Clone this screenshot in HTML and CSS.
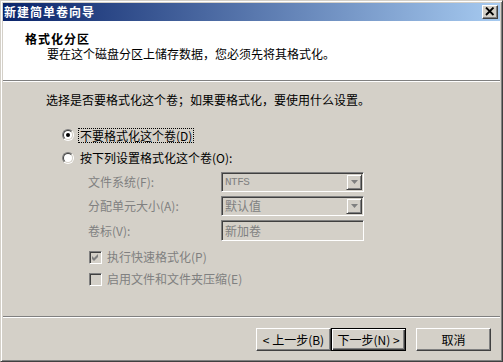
FILE: index.html
```html
<!DOCTYPE html>
<html lang="zh-CN">
<head>
<meta charset="utf-8">
<title>新建简单卷向导</title>
<link rel="stylesheet" href="styles.css">
</head>
<body>
<div class="window">
  <div class="titlebar">
    <span class="title">新建简单卷向导</span>
    <span class="close"><svg width="10" height="9" viewBox="0 0 10 9"><path d="M1 0.5 L8.5 8 M8.5 0.5 L1 8" stroke="#000" stroke-width="1.8" fill="none"/></svg></span>
  </div>
  <div class="header">
    <div class="h-title">格式化分区</div>
    <div class="h-sub">要在这个磁盘分区上储存数据，您必须先将其格式化。</div>
  </div>
  <div class="body">
    <div class="intro">选择是否要格式化这个卷；如果要格式化，要使用什么设置。</div>
    <div class="opt opt1"><span class="radio checked"></span><span class="focus">不要格式化这个卷(D)</span></div>
    <div class="opt opt2"><span class="radio"></span><span class="opt-text">按下列设置格式化这个卷(O):</span></div>
    <div class="fields">
      <div class="label">文件系统(F):</div>
      <div class="combo"><span class="value latin">NTFS</span><span class="arrow"><svg width="7" height="4" viewBox="0 0 7 4"><path d="M0 0 H7 L3.5 4 Z" fill="#808080"/></svg></span></div>
      <div class="label">分配单元大小(A):</div>
      <div class="combo"><span class="value">默认值</span><span class="arrow"><svg width="7" height="4" viewBox="0 0 7 4"><path d="M0 0 H7 L3.5 4 Z" fill="#808080"/></svg></span></div>
      <div class="label">卷标(V):</div>
      <div class="textbox"><span class="value">新加卷</span></div>
    </div>
    <div class="chk chk1"><span class="checkbox"><svg width="7" height="7" viewBox="0 0 7 7"><path d="M0 2 L2 4 L6 0 V3 L2 7 L0 5 Z" fill="#808080"/></svg></span><span class="chk-text">执行快速格式化(P)</span></div>
    <div class="chk chk2"><span class="checkbox"></span><span class="chk-text">启用文件和文件夹压缩(E)</span></div>
    <div class="spacer"></div>
    <div class="sep"></div>
    <div class="buttons">
      <button class="btn">&lt; 上一步(B)</button>
      <button class="btn default">下一步(N) &gt;</button>
      <button class="btn cancel">取消</button>
    </div>
  </div>
</div>
</body>
</html>
```
FILE: styles.css
```css
html, body {
  margin: 0;
  padding: 0;
  background: #d4d0c8;
}
body {
  font-family: "Noto Sans CJK SC", "Noto Sans CJK JP", sans-serif;
  font-size: 12px;
  line-height: 14px;
  color: #000;
}
.window {
  width: 503px;
  height: 362px;
  box-sizing: border-box;
  border: 1px solid;
  border-color: #d4d0c8 #404040 #404040 #d4d0c8;
  box-shadow: inset 1px 1px 0 #fff, inset -1px -1px 0 #808080;
  padding: 2px;
  background: #d4d0c8;
  display: flex;
  flex-direction: column;
}
.titlebar {
  height: 18px;
  flex: none;
  background: linear-gradient(to right, #0a246a, #a6caf0);
  display: flex;
  align-items: flex-start;
  justify-content: space-between;
}
.title {
  color: #fff;
  font-weight: bold;
  letter-spacing: 1px;
  padding-left: 1px;
  line-height: 18px;
}
.close {
  width: 16px;
  height: 14px;
  box-sizing: border-box;
  margin-top: 2px;
  margin-right: 2px;
  background: #d4d0c8;
  border: 1px solid;
  border-color: #fff #404040 #404040 #fff;
  box-shadow: inset -1px -1px 0 #808080;
  display: flex;
  align-items: center;
  justify-content: center;
  padding: 0 1px 1px 0;
}
.close svg { display: block; }
.header {
  height: 59px;
  flex: none;
  background: #fff;
  border-bottom: 1px solid #808080;
  padding-top: 11px;
  box-sizing: content-box;
  height: 48px;
}
.h-title {
  font-weight: bold;
  padding-left: 22px;
  letter-spacing: 1px;
}
.h-sub {
  padding-left: 44px;
  margin-top: 1px;
}
.body {
  flex: 1;
  border-top: 1px solid #fff;
  display: flex;
  flex-direction: column;
}
.intro {
  margin-top: 11px;
  padding-left: 43px;
}
.opt {
  display: flex;
  align-items: center;
  height: 16px;
  padding-left: 59px;
}
.opt1 { margin-top: 20px; }
.opt2 { margin-top: 7px; }
.radio {
  position: relative;
  width: 12px;
  height: 12px;
  box-sizing: border-box;
  border-radius: 50%;
  border: 1px solid;
  border-color: #808080 #fff #fff #808080;
  flex: none;
}
.radio::before {
  content: "";
  position: absolute;
  inset: 0;
  border-radius: 50%;
  border: 1px solid;
  border-color: #404040 #d4d0c8 #d4d0c8 #404040;
  background: #fff;
}
.radio.checked::after {
  content: "";
  position: absolute;
  left: 3px;
  top: 3px;
  width: 4px;
  height: 4px;
  border-radius: 50%;
  background: #000;
}
.focus {
  margin-left: 4px;
  padding: 0 1px;
  border: 1px dotted #000;
  line-height: 13px;
}
.opt-text { margin-left: 6px; }
.fields {
  margin-top: 6px;
  padding-left: 85px;
  display: grid;
  grid-template-columns: 133px 143px;
  grid-template-rows: 20px 20px 21px;
  row-gap: 4px;
  align-items: center;
  color: #808080;
}
.combo, .textbox {
  height: 100%;
  box-sizing: border-box;
  border: 1px solid;
  border-color: #808080 #fff #fff #808080;
  box-shadow: inset 1px 1px 0 #404040, inset -1px -1px 0 #d4d0c8;
  padding: 2px 2px 2px 3px;
  display: flex;
  align-items: center;
  justify-content: space-between;
}
.value { line-height: 14px; }
.latin { font-family: "Liberation Mono", monospace; font-size: 11px; letter-spacing: -0.5px; }
.arrow {
  width: 16px;
  height: 16px;
  box-sizing: border-box;
  margin-right: -1px;
  border: 1px solid;
  border-color: #d4d0c8 #404040 #404040 #d4d0c8;
  box-shadow: inset 1px 1px 0 #fff, inset -1px -1px 0 #808080;
  display: flex;
  align-items: center;
  justify-content: center;
  padding-bottom: 1px;
}
.arrow svg { display: block; }
.chk {
  display: flex;
  align-items: center;
  height: 16px;
  padding-left: 86px;
  color: #808080;
}
.chk1 { margin-top: 8px; }
.chk2 { margin-top: 6px; }
.checkbox {
  width: 13px;
  height: 13px;
  box-sizing: border-box;
  border: 1px solid;
  border-color: #808080 #fff #fff #808080;
  box-shadow: inset 1px 1px 0 #404040, inset -1px -1px 0 #d4d0c8;
  background: #d4d0c8;
  display: flex;
  align-items: center;
  justify-content: center;
  flex: none;
}
.checkbox svg { display: block; }
.chk-text { margin-left: 5px; }
.spacer { flex: 1; }
.sep {
  border-top: 1px solid #808080;
  border-bottom: 1px solid #fff;
}
.buttons {
  display: flex;
  justify-content: flex-end;
  margin-top: 10px;
  margin-bottom: 8px;
  padding-right: 9px;
}
.btn {
  width: 75px;
  height: 23px;
  box-sizing: border-box;
  font: inherit;
  color: #000;
  background: #d4d0c8;
  border: 1px solid;
  border-color: #fff #404040 #404040 #fff;
  box-shadow: inset -1px -1px 0 #808080;
  padding: 0;
  margin: 0;
  line-height: 14px;
}
.btn.default {
  border: 1px solid #000;
  box-shadow: inset 1px 1px 0 #fff, inset -1px -1px 0 #404040, inset -2px -2px 0 #808080;
}
.btn.cancel { margin-left: 10px; }
```
